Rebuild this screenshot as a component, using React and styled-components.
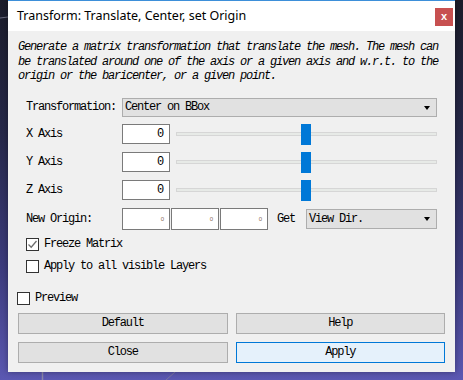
import styled, { createGlobalStyle } from "styled-components";

const GlobalStyle = createGlobalStyle`
	html, body {
		margin: 0;
		padding: 0;
		background: #24264a;
	}
`;

const MONO = `"Liberation Mono", "DejaVu Sans Mono", monospace`;

const Desktop = styled.div`
	position: relative;
	width: 463px;
	height: 380px;
	overflow: hidden;
	padding-left: 8px;
	box-sizing: border-box;
	background: linear-gradient(180deg, #1b1c2a 0%, #262849 35%, #3c3b7c 70%, #5b58b2 100%);
`;

const Scribble = styled.svg`
	position: absolute;
	left: 0;
	top: 0;
	width: 463px;
	height: 380px;
	pointer-events: none;
`;

const Window = styled.div`
	position: relative;
	width: 447px;
	height: 372px;
	background: #f0f0f0;
	border-top: 1px solid #3d8fd9;
	box-sizing: border-box;
	display: flex;
	flex-direction: column;
	box-shadow: 0 0 6px rgba(0, 0, 0, 0.35);
`;

const TitleBar = styled.div`
	height: 30px;
	background: #ffffff;
	display: flex;
	align-items: flex-start;
	justify-content: space-between;
	padding-left: 9px;
	flex-shrink: 0;
`;

const Title = styled.div`
	font-family: "Noto Sans", "Open Sans", sans-serif;
	font-size: 12.5px;
	line-height: 30px;
	color: #000;
`;

const CloseButton = styled.div`
	width: 18px;
	height: 18px;
	margin: 7px 2px 0 0;
	background: #c75050;
	color: #fff;
	font-family: "Liberation Sans", sans-serif;
	font-weight: bold;
	font-size: 11px;
	line-height: 17px;
	text-align: center;
`;

const Body = styled.div`
	padding: 9px 10px 10px 10px;
	display: flex;
	flex-direction: column;
	font-family: ${MONO};
	font-size: 12px;
	letter-spacing: -1.2px;
	color: #000;
`;

const Description = styled.p`
	margin: 0;
	font-style: italic;
	line-height: 14.5px;
	white-space: pre;
`;

const Form = styled.div`
	margin-top: 14px;
	padding: 0 8px;
	display: flex;
	flex-direction: column;
	gap: 7px;
`;

const Row = styled.div`
	display: grid;
	grid-template-columns: 96px 1fr;
	align-items: center;
	height: ${(p) => p.$h}px;
`;

const Label = styled.span`
	white-space: pre;
`;

const Controls = styled.div`
	display: flex;
	align-items: center;
	height: 100%;
`;

const Combo = styled.div`
	flex: 1;
	height: ${(p) => p.$h || 19}px;
	box-sizing: border-box;
	background: #e1e1e1;
	border: 1px solid #adadad;
	display: flex;
	align-items: center;
	justify-content: space-between;
	padding: 0 6px 0 2px;
	margin-left: ${(p) => p.$ml || 0}px;
`;

const Arrow = styled.span`
	width: 0;
	height: 0;
	border-left: 3.5px solid transparent;
	border-right: 3.5px solid transparent;
	border-top: 4px solid #000;
	margin-top: 1px;
`;

const NumberBox = styled.div`
	width: 48px;
	height: ${(p) => p.$h || 20}px;
	box-sizing: border-box;
	background: #fff;
	border: 1px solid #7a7a7a;
	display: flex;
	align-items: center;
	justify-content: flex-end;
	padding-right: ${(p) => p.$pr || 6}px;
	flex-shrink: 0;
`;

const TinyZero = styled.span`
	font-family: "Liberation Sans", sans-serif;
	font-size: 6px;
	letter-spacing: 0;
	color: #8a6a5a;
	margin-top: 1px;
`;

const Slider = styled.div`
	position: relative;
	flex: 1;
	height: 21px;
	margin-left: 6px;
	display: flex;
	align-items: center;
	justify-content: center;
`;

const Track = styled.div`
	position: absolute;
	left: 0;
	right: 0;
	top: 8px;
	height: 4px;
	box-sizing: border-box;
	background: #e7eae7;
	border: 1px solid #d6d6d6;
`;

const Thumb = styled.div`
	position: relative;
	width: 10px;
	height: 21px;
	background: #0078d7;
	margin-left: -1px;
`;

const Triple = styled.div`
	display: flex;
	gap: 1px;
`;

const GetLabel = styled.span`
	margin-left: 9px;
`;

const CheckGroup = styled.div`
	margin-top: 1px;
	display: flex;
	flex-direction: column;
	gap: 9px;
`;

const CheckRow = styled.label`
	display: flex;
	align-items: center;
	gap: 5px;
	height: 13px;
	margin-left: ${(p) => p.$ml || 0}px;
	margin-top: ${(p) => p.$mt || 0}px;
`;

const Box = styled.span`
	width: 13px;
	height: 13px;
	box-sizing: border-box;
	border: 1px solid #333;
	background: #fff;
	display: flex;
	align-items: center;
	justify-content: center;
	flex-shrink: 0;
`;

const Buttons = styled.div`
	margin-top: 8px;
	display: grid;
	grid-template-columns: 1fr 1fr;
	gap: 8px;
`;

const Button = styled.div`
	height: 21px;
	box-sizing: border-box;
	border: 1px solid ${(p) => (p.$primary ? "#0078d7" : "#adadad")};
	background: ${(p) => (p.$primary ? "#e5f1fb" : "#e1e1e1")};
	display: flex;
	align-items: center;
	justify-content: center;
`;

function CheckBox({ checked }) {
	return (
		<Box>
			{checked && (
				<svg width="11" height="11" viewBox="0 0 11 11">
					<polyline points="1.5,5.5 4.2,8.2 9.5,2" fill="none" stroke="#6e6e6e" strokeWidth="1.3" />
				</svg>
			)}
		</Box>
	);
}

function AxisRow({ label }) {
	return (
		<Row $h={21}>
			<Label>{label}</Label>
			<Controls>
				<NumberBox>0</NumberBox>
				<Slider>
					<Track />
					<Thumb />
				</Slider>
			</Controls>
		</Row>
	);
}

export default function App() {
	return (
		<>
			<GlobalStyle />
			<Desktop>
				<Scribble viewBox="0 0 463 380">
					<line x1="42.5" y1="370" x2="42.5" y2="380" stroke="#8a86a8" strokeWidth="1.5" />
					<line x1="166" y1="380" x2="175" y2="372" stroke="#7a76a0" strokeWidth="1" />
					<line x1="0" y1="18" x2="8" y2="17" stroke="#6a6c80" strokeWidth="1" />
				</Scribble>
				<Window>
					<TitleBar>
						<Title>Transform: Translate, Center, set Origin</Title>
						<CloseButton>x</CloseButton>
					</TitleBar>
					<Body>
						<Description>
							{"Generate a matrix transformation that translate the mesh. The mesh can\nbe translated around one of the axis or a given axis and w.r.t. to the\norigin or the baricenter, or a given point."}
						</Description>
						<Form>
							<Row $h={19}>
								<Label>Transformation:</Label>
								<Combo>
									<span>Center on BBox</span>
									<Arrow />
								</Combo>
							</Row>
							<AxisRow label="X Axis" />
							<AxisRow label="Y Axis" />
							<AxisRow label="Z Axis" />
							<Row $h={22}>
								<Label>New Origin:</Label>
								<Controls>
									<Triple>
										<NumberBox $h={22} $pr={5}><TinyZero>0</TinyZero></NumberBox>
										<NumberBox $h={22} $pr={5}><TinyZero>0</TinyZero></NumberBox>
										<NumberBox $h={22} $pr={5}><TinyZero>0</TinyZero></NumberBox>
									</Triple>
									<GetLabel>Get</GetLabel>
									<Combo $h={20} $ml={11}>
										<span>View Dir.</span>
										<Arrow />
									</Combo>
								</Controls>
							</Row>
							<CheckGroup>
								<CheckRow>
									<CheckBox checked />
									<span>Freeze Matrix</span>
								</CheckRow>
								<CheckRow>
									<CheckBox />
									<span>Apply to all visible Layers</span>
								</CheckRow>
							</CheckGroup>
						</Form>
						<CheckRow $ml={-1} $mt={19}>
							<CheckBox />
							<span>Preview</span>
						</CheckRow>
						<Buttons>
							<Button>Default</Button>
							<Button>Help</Button>
							<Button>Close</Button>
							<Button $primary>Apply</Button>
						</Buttons>
					</Body>
				</Window>
			</Desktop>
		</>
	);
}
